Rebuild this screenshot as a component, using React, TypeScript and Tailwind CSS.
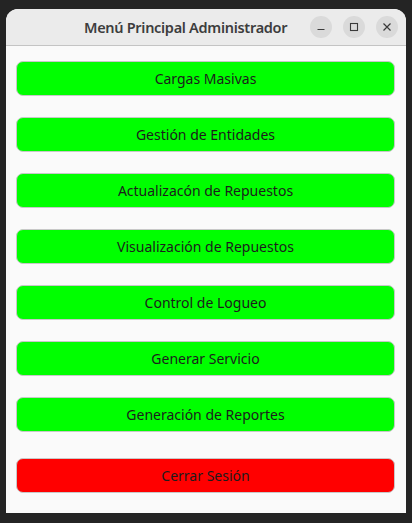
import React from "react";

const options = [
  "Cargas Masivas",
  "Gestión de Entidades",
  "Actualizacón de Repuestos",
  "Visualización de Repuestos",
  "Control de Logueo",
  "Generar Servicio",
  "Generación de Reportes",
];

const App = () => {
  return (
    <div className="w-[412px] h-[523px] bg-[#242424] pt-[9px] px-[6px] font-['Noto_Sans',sans-serif]">
      <div className="w-[400px] h-[504px] bg-[#fafafa] rounded-t-[12px] overflow-hidden flex flex-col">
        {/* title bar */}
        <div className="h-[37px] shrink-0 bg-[#ebebeb] border-b border-[#c4c4c4] flex items-center relative">
          <span className="absolute left-[78px] top-[8px] text-[14.5px] font-semibold text-[#3d3d3d] tracking-[-0.3px]">
            Menú Principal Administrador
          </span>
          <div className="ml-auto mr-[8px] flex gap-[11px]">
            <button className="w-[22px] h-[22px] rounded-full bg-[#dadada] flex items-center justify-center">
              <svg width="10" height="10" viewBox="0 0 10 10">
                <path d="M1.5 7.5h7" stroke="#3a3a3a" strokeWidth="1.2" />
              </svg>
            </button>
            <button className="w-[22px] h-[22px] rounded-full bg-[#dadada] flex items-center justify-center">
              <svg width="10" height="10" viewBox="0 0 10 10">
                <rect x="1.5" y="1.5" width="7" height="7" fill="none" stroke="#3a3a3a" strokeWidth="1.1" />
              </svg>
            </button>
            <button className="w-[22px] h-[22px] rounded-full bg-[#dadada] flex items-center justify-center">
              <svg width="10" height="10" viewBox="0 0 10 10">
                <path d="M1.5 1.5l7 7M8.5 1.5l-7 7" stroke="#3a3a3a" strokeWidth="1.2" />
              </svg>
            </button>
          </div>
        </div>
        {/* menu */}
        <div className="flex flex-col px-[10px] pt-[15px]">
          {options.map((o) => (
            <button
              key={o}
              className="h-[35px] mb-[21px] w-[379px] rounded-[7px] bg-[#00ff00] border border-[#c8c8c8] text-[14px] text-[#1c1c1c] flex items-center justify-center"
            >
              {o}
            </button>
          ))}
          <button className="h-[35px] mt-[5px] w-[379px] rounded-[7px] bg-[#ff0000] border border-[#c8c8c8] text-[14px] text-[#1c1c1c] flex items-center justify-center">
            Cerrar Sesión
          </button>
        </div>
      </div>
    </div>
  );
};

export default App;
